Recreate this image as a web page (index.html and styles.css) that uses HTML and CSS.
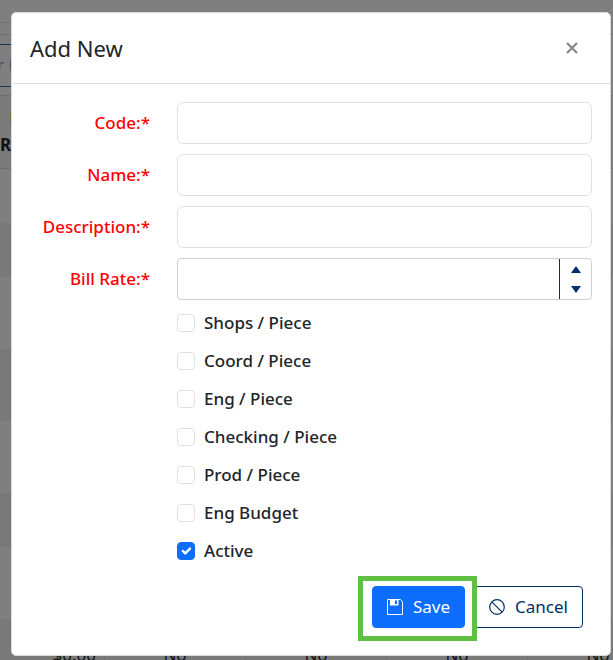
FILE: index.html
```
<!DOCTYPE html>
<html lang="en">
<head>
<meta charset="utf-8">
<meta name="viewport" content="width=device-width, initial-scale=1">
<title>Add New</title>
<link rel="stylesheet" href="styles.css">
</head>
<body>
<div class="backdrop" aria-hidden="true">
  <div class="strip"></div>
  <div class="toolbar"><span class="filter">r B</span></div>
  <div class="thead"><span>Bill<br>Rate</span></div>
  <div class="band light short"></div>
  <div class="band short"></div>
  <div class="band light"></div>
  <div class="band"></div>
  <div class="band light"></div>
  <div class="band short"></div>
  <div class="band light"></div>
  <div class="band cells"><span class="amount">$0.00</span><span>No</span><span>No</span><span>No</span><span>No</span></div>
</div>
<main class="stage">
  <section class="dialog" role="dialog" aria-labelledby="title">
    <header class="head">
      <h1 id="title">Add New</h1>
      <button class="close" type="button" aria-label="Close">
        <svg viewBox="0 0 12 12" width="12" height="12"><path d="M1 1l10 10M11 1l-10 10" fill="none" stroke="currentColor" stroke-width="2"/></svg>
      </button>
    </header>
    <form class="form">
      <div class="field"><label for="code">Code:*</label><input class="box" id="code" type="text"></div>
      <div class="field"><label for="name">Name:*</label><input class="box" id="name" type="text"></div>
      <div class="field"><label for="desc">Description:*</label><input class="box" id="desc" type="text"></div>
      <div class="field"><label for="rate">Bill Rate:*</label>
        <div class="numeric">
          <input id="rate" type="number">
          <div class="spin">
            <button type="button" aria-label="Increase"><svg viewBox="0 0 10 7" width="10" height="7"><path d="M0 7L5 0l5 7z" fill="currentColor"/></svg></button>
            <button type="button" aria-label="Decrease"><svg viewBox="0 0 10 7" width="10" height="7"><path d="M0 0h10L5 7z" fill="currentColor"/></svg></button>
          </div>
        </div>
      </div>
      <div class="checks">
        <label><input type="checkbox">Shops / Piece</label>
        <label><input type="checkbox">Coord / Piece</label>
        <label><input type="checkbox">Eng / Piece</label>
        <label><input type="checkbox">Checking / Piece</label>
        <label><input type="checkbox">Prod / Piece</label>
        <label><input type="checkbox">Eng Budget</label>
        <label><input type="checkbox" checked>Active</label>
      </div>
      <footer class="actions">
        <button class="btn save" type="button">
          <svg viewBox="0 0 16 16" width="16" height="16"><path d="M.5.5h13l2 2v13H.5z" fill="none" stroke="currentColor"/><path d="M3 .5h8.500v6H3z" fill="currentColor"/><path d="M8 1.500h2v3.500H8z" fill="#0d6efd"/></svg>
          Save
        </button>
        <button class="btn cancel" type="button">
          <svg viewBox="0 0 16 16" width="16" height="16"><circle cx="8" cy="8" r="7.300" fill="none" stroke="currentColor" stroke-width="1.200"/><path d="M2.800 2.800l10.400 10.400" stroke="currentColor" stroke-width="1.200"/></svg>
          Cancel
        </button>
      </footer>
    </form>
  </section>
</main>
</body>
</html>
```
FILE: styles.css
```
* { box-sizing: border-box; }

body {
  margin: 0;
  min-height: 100vh;
  overflow: hidden;
  background: #7f7f7f;
  color: #212529;
  font: 17px/26px "Noto Sans", "Open Sans", sans-serif;
}

button, input { font: inherit; color: inherit; }

/* Dimmed page behind the dialog */
.backdrop {
  position: absolute;
  inset: 0;
  overflow: hidden;
  padding-top: 22px;
}

.strip { height: 12px; border-top: 1px solid #6f7072; }

.toolbar {
  height: 61px;
  padding-top: 9px;
  border-top: 1px solid #6f7072;
}

.filter {
  display: block;
  width: 100px;
  height: 43px;
  border: solid #1c3558;
  border-width: 1px 0;
  color: #3e4d68;
  line-height: 40px;
  text-indent: -3px;
}

.thead {
  height: 74px;
  padding-top: 10px;
  border: solid #6f7072;
  border-width: 1px 0;
  background: #7b7b7b;
  color: #101214;
  font-weight: 700;
}

.thead span { display: block; width: 36px; text-align: right; }

.band { height: 72px; background: #797979; }
.band.light { background: #7f7f7f; }
.band.short { height: 54px; }

.cells {
  display: grid;
  grid-template-columns: 105px repeat(4, 141px);
  color: #101214;
  line-height: 72px;
  text-align: center;
}

.cells span { border-right: 1px solid #6f7072; }
.cells .amount { padding-right: 8px; text-align: right; }

/* Dialog */
.stage { position: relative; padding: 12px 2px 4px 11px; }

.dialog {
  border: 1px solid #d9dadb;
  border-radius: 5px;
  background: #fff;
}

.head {
  display: flex;
  align-items: center;
  justify-content: space-between;
  height: 71px;
  padding: 0 32px 0 18px;
  border-bottom: 1px solid #dee2e6;
}

h1 { margin: 0; font-size: 22px; font-weight: 400; }

.close {
  display: flex;
  padding: 0;
  border: 0;
  background: none;
  color: #858585;
}

.form { padding: 18px; }

.field {
  display: grid;
  grid-template-columns: 120px 1fr;
  column-gap: 27px;
  align-items: center;
  margin-bottom: 10px;
}

.field > label {
  color: #f00;
  font-weight: 500;
  text-align: right;
}

.box, .numeric {
  width: 100%;
  height: 42px;
  border: 1px solid #dee2e6;
  border-radius: 6px;
  background: #fff;
}

.box { padding: 0 12px; }

.numeric {
  display: flex;
  overflow: hidden;
  border-color: #ced0d3;
  border-radius: 4px;
}

.numeric input {
  flex: 1;
  min-width: 0;
  padding: 0 12px;
  border: 0;
  background: none;
  appearance: textfield;
}

.numeric input::-webkit-inner-spin-button { appearance: none; }

.spin {
  display: grid;
  width: 32px;
  border-left: 1px solid #002f6c;
}

.spin button {
  display: grid;
  place-items: center;
  padding: 0;
  border: 0;
  background: none;
  color: #002f6c;
}

.checks {
  display: grid;
  gap: 12px;
  padding-left: 147px;
}

.checks label {
  display: flex;
  align-items: center;
  gap: 9px;
  font-weight: 500;
}

.checks input {
  appearance: none;
  width: 18px;
  height: 18px;
  margin: 0;
  border: 1px solid #dee2e6;
  border-radius: 4px;
}

.checks input:checked {
  border-color: #0d6efd;
  background: #0d6efd url("data:image/svg+xml,%3Csvg xmlns='http://www.w3.org/2000/svg' viewBox='0 0 20 20'%3E%3Cpath fill='none' stroke='%23fff' stroke-linecap='round' stroke-linejoin='round' stroke-width='3' d='m6 10 3 3 6-6'/%3E%3C/svg%3E") center / contain;
}

.actions {
  display: flex;
  justify-content: flex-end;
  gap: 9px;
  padding: 22px 9px 9px;
}

.btn {
  display: flex;
  align-items: center;
  gap: 10px;
  height: 42px;
  padding: 0 14px;
  border: 1px solid #002f6c;
  border-radius: 4px;
  background: #fff;
  color: #002f6c;
}

.save {
  position: relative;
  z-index: 1;
  border-color: #0d6efd;
  background: #0d6efd;
  color: #fff;
}

/* Highlight frame around the primary action */
.save::after {
  content: "";
  position: absolute;
  inset: -11px -13px -14px -15px;
  border: 5px solid #5fc044;
}
```
